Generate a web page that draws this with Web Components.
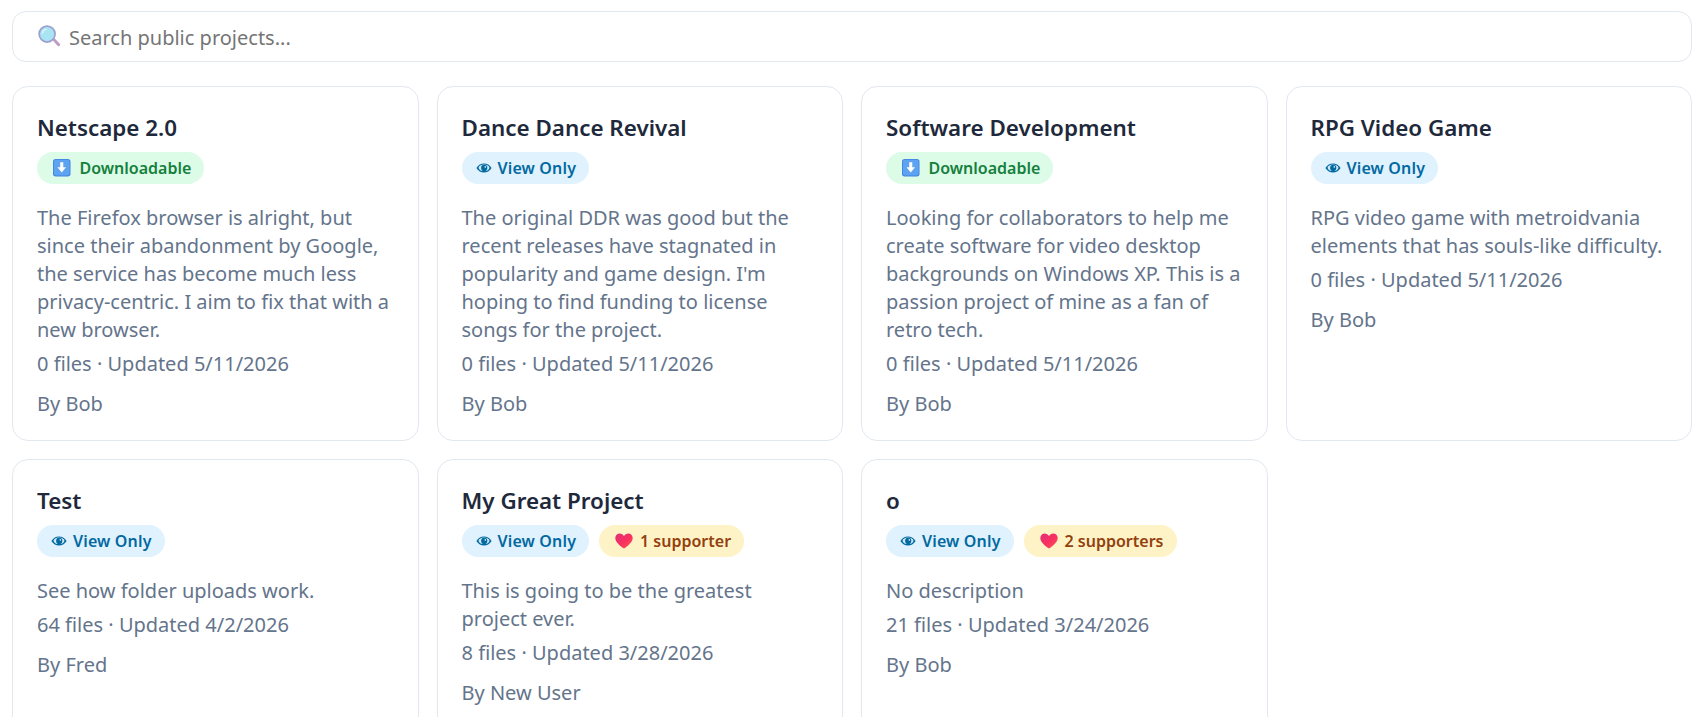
<!DOCTYPE html>
<html lang="en">
<head>
<meta charset="utf-8">
<title>Public projects</title>
<style>
	html, body { margin: 0; background: #fff; height: 100%; overflow: hidden; }
	body { font-family: "Noto Sans", "Open Sans", sans-serif; }
</style>
</head>
<body>
<project-browser>
	<search-box slot="search" placeholder="Search public projects..."></search-box>
	<project-card title="Netscape 2.0" meta="0 files · Updated 5/11/2026" author="Bob">
		<status-pill slot="pills" kind="download">Downloadable</status-pill>
		The Firefox browser is alright, but since their abandonment by Google, the service has become much less privacy-centric. I aim to fix that with a new browser.
	</project-card>
	<project-card title="Dance Dance Revival" meta="0 files · Updated 5/11/2026" author="Bob">
		<status-pill slot="pills" kind="view">View Only</status-pill>
		The original DDR was good but the recent releases have stagnated in popularity and game design. I'm hoping to find funding to license songs for the project.
	</project-card>
	<project-card title="Software Development" meta="0 files · Updated 5/11/2026" author="Bob">
		<status-pill slot="pills" kind="download">Downloadable</status-pill>
		Looking for collaborators to help me create software for video desktop backgrounds on Windows XP. This is a passion project of mine as a fan of retro tech.
	</project-card>
	<project-card title="RPG Video Game" meta="0 files · Updated 5/11/2026" author="Bob">
		<status-pill slot="pills" kind="view">View Only</status-pill>
		RPG video game with metroidvania elements that has souls-like difficulty.
	</project-card>
	<project-card title="Test" meta="64 files · Updated 4/2/2026" author="Fred">
		<status-pill slot="pills" kind="view">View Only</status-pill>
		See how folder uploads work.
	</project-card>
	<project-card title="My Great Project" meta="8 files · Updated 3/28/2026" author="New User">
		<status-pill slot="pills" kind="view">View Only</status-pill>
		<status-pill slot="pills" kind="support">1 supporter</status-pill>
		This is going to be the greatest project ever.
	</project-card>
	<project-card title="o" meta="21 files · Updated 3/24/2026" author="Bob">
		<status-pill slot="pills" kind="view">View Only</status-pill>
		<status-pill slot="pills" kind="support">2 supporters</status-pill>
		No description
	</project-card>
</project-browser>

<script>
// emoji look-alikes, the colour emoji font isn't available
const ICONS = {
	download: `<svg viewBox="0 0 16 16" width="17.500" height="17.500"><rect x="0" y="0" width="16" height="16" rx="2.500" fill="#3f83e0"/><rect x="0.800" y="0.600" width="14.400" height="14.400" rx="2" fill="#5ea2f2"/><path d="M6.600 3h2.800v4.600h2.500L8 12.400 4.100 7.600h2.500z" fill="#fff"/></svg>`,
	view: `<svg viewBox="0 0 16 10" width="16" height="10"><path d="M0.400 5C2.400 1.800 5 .4 8 .4s5.600 1.400 7.600 4.600C13.600 8.200 11 9.600 8 9.600S2.400 8.200.4 5z" fill="#0369a1"/><ellipse cx="8" cy="4.800" rx="5.400" ry="3.300" fill="#cfe9f7"/><circle cx="8.200" cy="4.900" r="3.100" fill="#0369a1"/><circle cx="9.300" cy="3.900" r=".8" fill="#e0f2fe"/></svg>`,
	support: `<svg viewBox="0 0 18 16" width="18" height="16"><defs><linearGradient id="h" x1="0" y1="0" x2="1" y2="1"><stop offset="0" stop-color="#e0307a"/><stop offset=".55" stop-color="#f8315f"/><stop offset="1" stop-color="#ff5a4f"/></linearGradient></defs><path d="M9 15.600C4.600 12.400.3 9 .3 5 .3 2.300 2.300.4 4.700.4 6.500.4 8 1.300 9 3 10 1.300 11.500.4 13.300.4c2.400 0 4.400 1.900 4.400 4.600 0 4-4.300 7.400-8.700 10.600z" fill="url(#h)"/></svg>`,
	search: `<svg viewBox="0 0 24 24" width="23" height="23"><path d="M14.500 15l2-2 6 6.200c.8.800.8 1.700.1 2.400-.7.700-1.700.7-2.400-.1z" fill="#bd9bc4"/><circle cx="9.500" cy="9.500" r="8.300" fill="#a9e4f3" stroke="#9d9fd0" stroke-width="1.800"/><path d="M4.500 8.500c.5-2.200 2-3.700 4-4" fill="none" stroke="#d7f5fb" stroke-width="1.600" stroke-linecap="round"/></svg>`,
};

class ProjectBrowser extends HTMLElement {
	constructor() {
		super();
		this.attachShadow({ mode: "open" });
		this.shadowRoot.innerHTML = `
			<style>
				:host { display: block; padding: 11px 12px 0; }
				.grid {
					display: grid;
					grid-template-columns: repeat(4, minmax(0, 1fr));
					gap: 18px;
					margin-top: 24px;
				}
			</style>
			<slot name="search"></slot>
			<div class="grid"><slot></slot></div>
		`;
	}
}

class SearchBox extends HTMLElement {
	constructor() {
		super();
		this.attachShadow({ mode: "open" });
		this.shadowRoot.innerHTML = `
			<style>
				:host { display: flex; align-items: center; gap: 8px; box-sizing: border-box; height: 51px; padding: 0 24px 0 25px; border: 1px solid #e2e8f0; border-radius: 14px; background: #fff; }
				svg { flex: none; }
				input { flex: 1; min-width: 0; border: 0; outline: 0; padding: 2px 0 0; background: none; font: 20px "Noto Sans", "Open Sans", sans-serif; color: #0f172a; }
				input::placeholder { color: #757575; opacity: 1; }
			</style>
			${ICONS.search}
			<input type="text">
		`;
	}
	connectedCallback() {
		this.shadowRoot.querySelector("input").placeholder = this.getAttribute("placeholder");
	}
}

class StatusPill extends HTMLElement {
	constructor() {
		super();
		this.attachShadow({ mode: "open" });
	}
	connectedCallback() {
		this.shadowRoot.innerHTML = `
			<style>
				:host { display: inline-flex; align-items: center; height: 32px; padding: 0 13px 0 14px; border-radius: 16px; font-size: 16px; font-weight: 600; white-space: nowrap; }
				:host([kind="download"]) { background: #dcfce7; color: #15803d; padding-left: 16px; gap: 9px; }
				:host([kind="view"]) { background: #e0f2fe; color: #0369a1; gap: 6px; letter-spacing: .15px; }
				:host([kind="support"]) { background: #fef3c7; color: #92400e; padding-left: 16px; gap: 7px; }
				svg { flex: none; }
			</style>
			${ICONS[this.getAttribute("kind")]}<slot></slot>
		`;
	}
}

class ProjectCard extends HTMLElement {
	constructor() {
		super();
		this.attachShadow({ mode: "open" });
	}
	connectedCallback() {
		this.shadowRoot.innerHTML = `
			<style>
				:host { display: block; box-sizing: border-box; min-height: 355px; padding: 25px 24px 22px; border: 1px solid #e2e8f0; border-radius: 16px; background: #fff; }
				h3 { margin: 0; font-size: 22.400px; font-weight: 600; line-height: 32px; color: #1e293b; }
				.pills { display: flex; gap: 10px; margin-top: 8px; }
				.desc { margin-top: 20px; font-size: 20px; line-height: 28px; color: #64748b; }
				.meta { margin-top: 6px; font-size: 20px; line-height: 28px; color: #64748b; }
				.by { margin-top: 12px; font-size: 20px; line-height: 28px; color: #64748b; }
			</style>
			<h3></h3>
			<div class="pills"><slot name="pills"></slot></div>
			<div class="desc"><slot></slot></div>
			<div class="meta"></div>
			<div class="by"></div>
		`;
		this.shadowRoot.querySelector("h3").textContent = this.getAttribute("title");
		this.shadowRoot.querySelector(".meta").textContent = this.getAttribute("meta");
		this.shadowRoot.querySelector(".by").textContent = "By " + this.getAttribute("author");
	}
}

customElements.define("project-browser", ProjectBrowser);
customElements.define("search-box", SearchBox);
customElements.define("status-pill", StatusPill);
customElements.define("project-card", ProjectCard);
</script>
</body>
</html>
